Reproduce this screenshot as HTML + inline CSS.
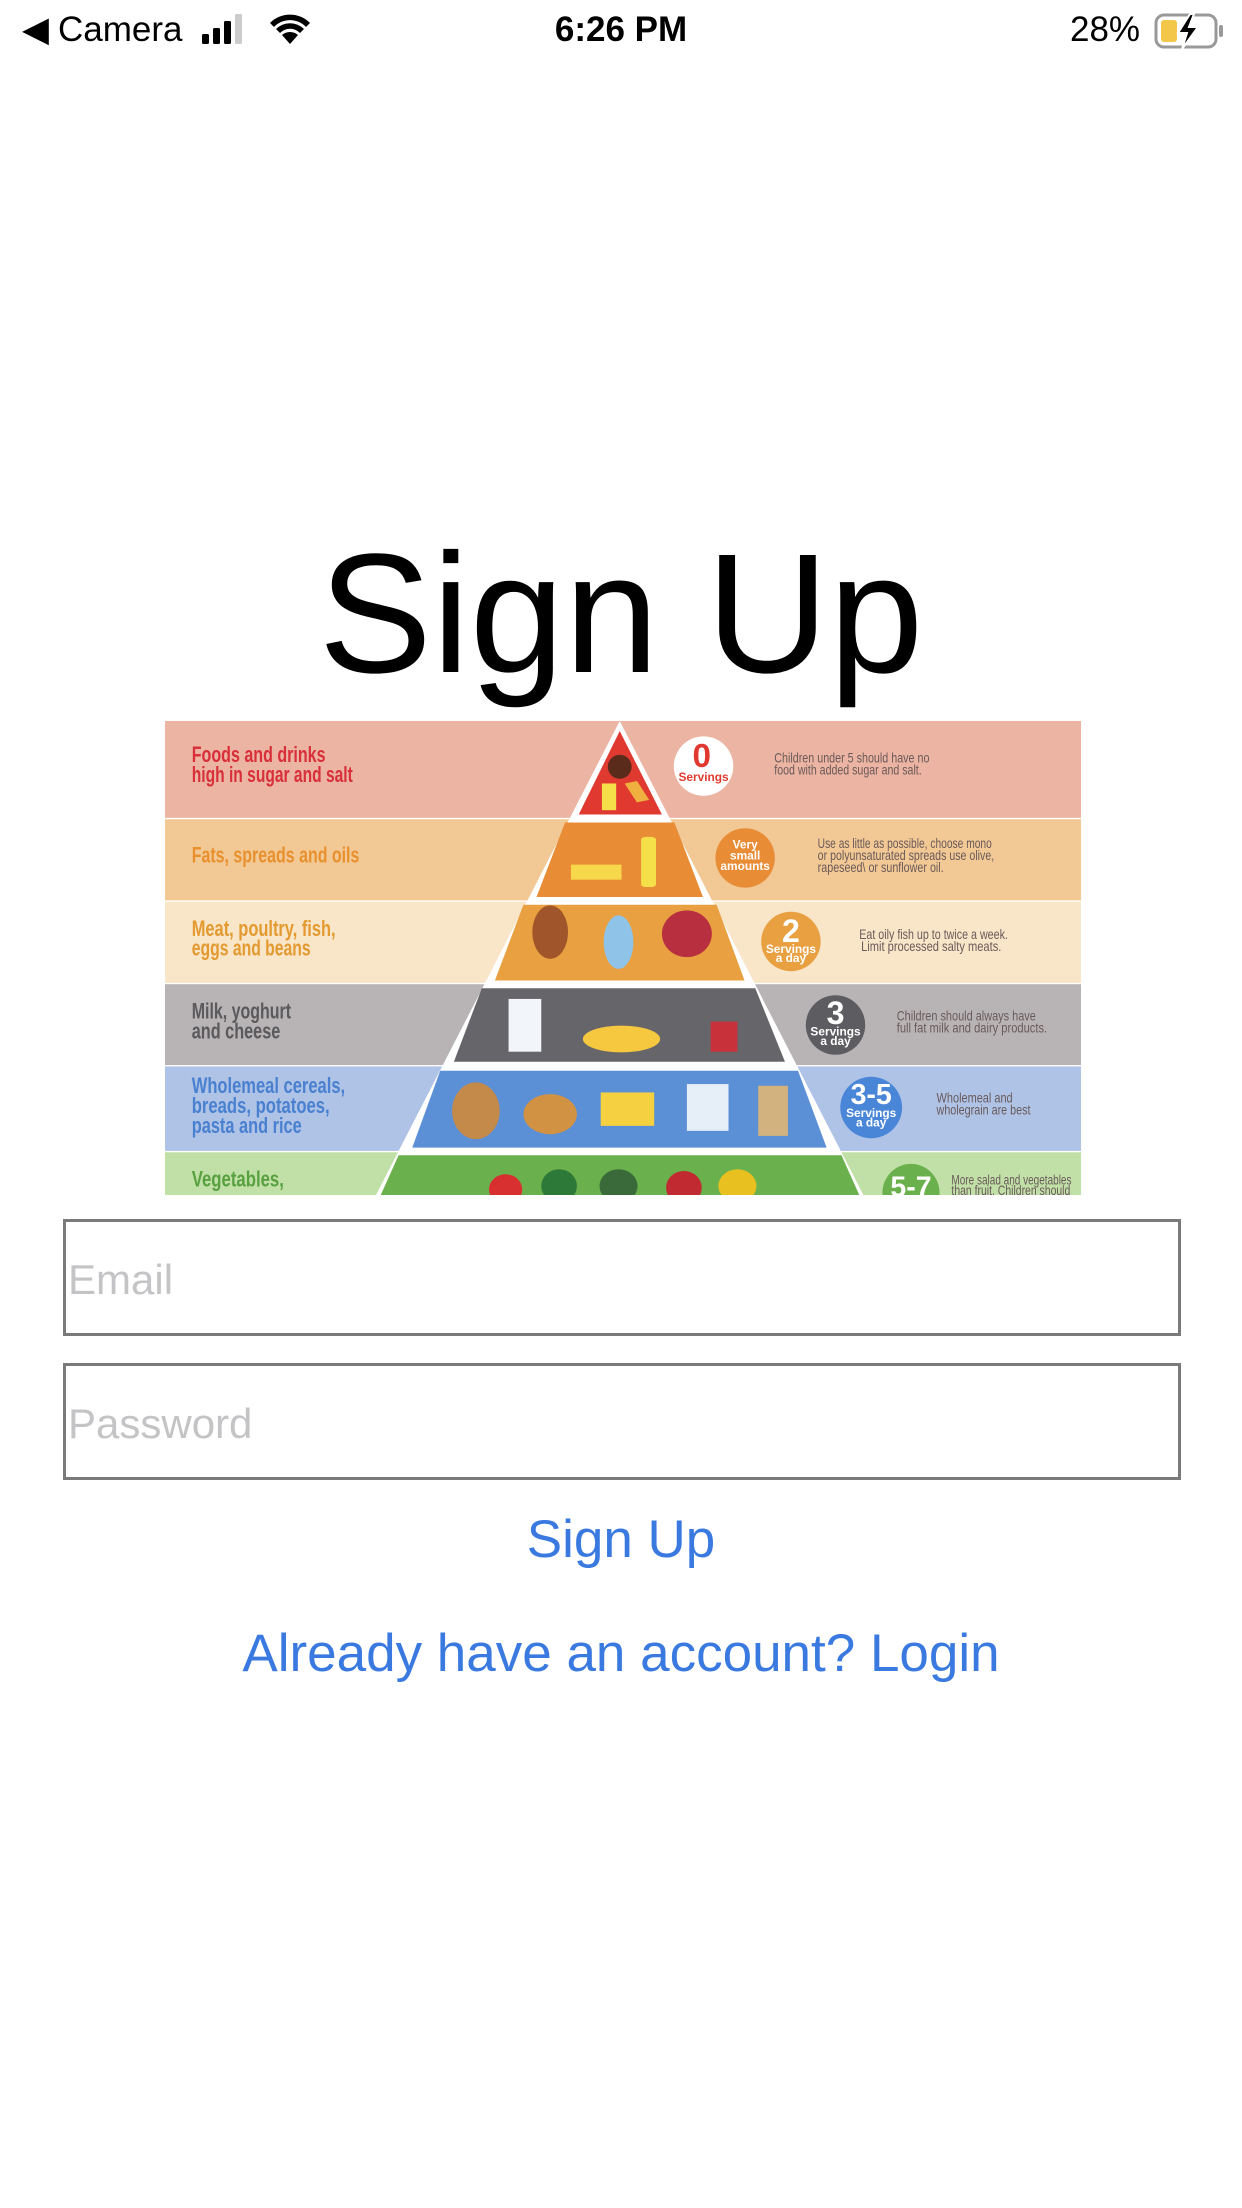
<!DOCTYPE html>
<html><head><meta charset="utf-8"><style>
html,body{margin:0;padding:0;background:#fff;}
body{width:1242px;height:2208px;position:relative;overflow:hidden;font-family:"Liberation Sans",Arial,sans-serif;}
.abs{position:absolute;}
.sb{font-size:35px;color:#000;top:10px;}
.inp{position:absolute;left:63px;width:1118px;height:117px;border:3px solid #7a7a7a;box-sizing:border-box;}
.ph{position:absolute;left:2px;top:34px;font-size:42px;color:#c4c4c6;}
.link{position:absolute;left:0;width:1242px;text-align:center;color:#3a7ae0;font-size:53px;}
</style></head><body>
<div class="abs sb" style="left:22px;">◀︎</div>
<div class="abs sb" style="left:58px;">Camera</div>
<svg class="abs" style="left:202px;top:14px" width="52" height="32" viewBox="0 0 52 32">
<rect x="0" y="20" width="7" height="10" rx="1.5" fill="#000"/><rect x="11" y="14" width="7" height="16" rx="1.5" fill="#000"/><rect x="22" y="7" width="7" height="23" rx="1.5" fill="#000"/><rect x="33" y="0" width="7" height="30" rx="1.5" fill="#ccc"/></svg>
<svg class="abs" style="left:268px;top:12px" width="44" height="34" viewBox="0 0 44 34">
<path d="M22 32 L14 23 A12 12 0 0 1 30 23 Z" fill="#000"/>
<path d="M8 17 A20 20 0 0 1 36 17 L32 21 A14 14 0 0 0 12 21 Z" fill="#000"/>
<path d="M2 11 A28 28 0 0 1 42 11 L38 15 A22 22 0 0 0 6 15 Z" fill="#000"/></svg>
<div class="abs sb" style="left:0;width:1242px;text-align:center;font-weight:bold;">6:26 PM</div>
<div class="abs sb" style="left:1070px;">28%</div>
<svg class="abs" style="left:1154px;top:12px" width="72" height="38" viewBox="0 0 72 38">
<rect x="2" y="3" width="60" height="32" rx="8" fill="none" stroke="#999" stroke-width="3"/>
<rect x="65" y="13" width="4" height="12" rx="2" fill="#999"/>
<rect x="7" y="8" width="16" height="22" rx="3" fill="#f3c74a"/>
<path d="M36 2 L24 21 L33 21 L28 37 L44 15 L35 15 L40 2 Z" fill="#000" stroke="#fff" stroke-width="2"/></svg>

<div class="abs" style="left:0;width:1242px;text-align:center;top:514px;font-size:170px;line-height:200px;color:#000;">Sign Up</div>

<svg class="abs" style="left:165px;top:721px" width="916" height="474" viewBox="7 28 1541 1419" preserveAspectRatio="none" font-family="Liberation Sans,Arial,sans-serif">
<rect x="7" y="28" width="1541" height="1419" fill="#fff"/>
<rect x="7" y="28" width="1541" height="290" fill="#ecb4a2"/>
<rect x="7" y="322" width="1541" height="243" fill="#f2c995"/>
<rect x="7" y="569" width="1541" height="243" fill="#f9e5c8"/>
<rect x="7" y="816" width="1541" height="242" fill="#b8b4b6"/>
<rect x="7" y="1062" width="1541" height="253" fill="#aec3e6"/>
<rect x="7" y="1319" width="1541" height="128" fill="#c1e0a7"/>
<polygon points="772,28 1182,1447 362,1447" fill="#fff"/>
<polygon points="772,58 843,308 703,308" fill="#e03a30"/>
<polygon points="680,332 864,332 912,555 632,555" fill="#e88c36"/>
<polygon points="610,578 935,578 982,805 562,805" fill="#e8a040"/>
<polygon points="540,828 1000,828 1050,1048 493,1048" fill="#66656a"/>
<polygon points="470,1075 1072,1075 1120,1305 423,1305" fill="#5b8fd6"/>
<polygon points="400,1328 1145,1328 1175,1447 370,1447" fill="#6ab04c"/>
<ellipse cx="772" cy="165" rx="20" ry="36" fill="#5a2a1a"/><rect x="742" y="215" width="24" height="80" fill="#f5e04a"/><rect x="790" y="210" width="22" height="60" fill="#f0b040" transform="rotate(-20 800 240)"/>
<rect x="690" y="458" width="85" height="45" fill="#f7d84a"/><rect x="808" y="375" width="25" height="150" rx="8" fill="#f5e04a"/>
<ellipse cx="655" cy="660" rx="30" ry="80" fill="#a0562a"/><ellipse cx="770" cy="690" rx="25" ry="80" fill="#8fc4e8"/><ellipse cx="885" cy="665" rx="42" ry="70" fill="#b83040"/>
<rect x="585" y="860" width="55" height="158" fill="#f2f6fa"/><ellipse cx="775" cy="980" rx="65" ry="40" fill="#f5c840"/><rect x="925" y="928" width="45" height="90" fill="#c8303a"/>
<ellipse cx="530" cy="1195" rx="40" ry="85" fill="#c48a4a"/><ellipse cx="655" cy="1205" rx="45" ry="60" fill="#d29244"/><rect x="740" y="1140" width="90" height="100" fill="#f5d040"/><rect x="885" y="1115" width="70" height="140" fill="#e6eef8"/><rect x="1005" y="1120" width="50" height="150" fill="#d2b27e"/>
<ellipse cx="580" cy="1430" rx="28" ry="45" fill="#d83030"/><ellipse cx="670" cy="1420" rx="30" ry="50" fill="#2d7a38"/><ellipse cx="770" cy="1420" rx="32" ry="50" fill="#3a6a3a"/><ellipse cx="880" cy="1425" rx="30" ry="50" fill="#c02a30"/><ellipse cx="970" cy="1420" rx="32" ry="50" fill="#e8c020"/>
<ellipse cx="913" cy="163" rx="50" ry="89" fill="#fff"/>
<ellipse cx="983" cy="438" rx="50" ry="89" fill="#e88c36"/>
<ellipse cx="1060" cy="688" rx="50" ry="89" fill="#e8a040"/>
<ellipse cx="1135" cy="938" rx="50" ry="89" fill="#5d5c60"/>
<ellipse cx="1195" cy="1185" rx="52" ry="92" fill="#4a86d8"/>
<ellipse cx="1262" cy="1440" rx="48" ry="86" fill="#6ab04c"/>
<g font-weight="bold" text-anchor="middle">
<text transform="translate(910,165) scale(1,1.78)" font-size="56" fill="#e03a30">0</text>
<text transform="translate(913,208) scale(1,1.78)" font-size="20" fill="#e03a30">Servings</text>
<text transform="translate(983,410) scale(1,1.78)" font-size="20" fill="#fff">Very</text>
<text transform="translate(983,442) scale(1,1.78)" font-size="20" fill="#fff">small</text>
<text transform="translate(983,474) scale(1,1.78)" font-size="20" fill="#fff">amounts</text>
<text transform="translate(1060,690) scale(1,1.78)" font-size="54" fill="#fff">2</text>
<text transform="translate(1060,722) scale(1,1.78)" font-size="20" fill="#fff">Servings</text>
<text transform="translate(1060,750) scale(1,1.78)" font-size="20" fill="#fff">a day</text>
<text transform="translate(1135,935) scale(1,1.78)" font-size="54" fill="#fff">3</text>
<text transform="translate(1135,970) scale(1,1.78)" font-size="20" fill="#fff">Servings</text>
<text transform="translate(1135,998) scale(1,1.78)" font-size="20" fill="#fff">a day</text>
<text transform="translate(1195,1175) scale(1,1.78)" font-size="48" fill="#fff">3-5</text>
<text transform="translate(1195,1214) scale(1,1.78)" font-size="20" fill="#fff">Servings</text>
<text transform="translate(1195,1242) scale(1,1.78)" font-size="20" fill="#fff">a day</text>
<text transform="translate(1262,1452) scale(1,1.78)" font-size="48" fill="#fff">5-7</text>
</g>
<g font-size="38" font-weight="bold" lengthAdjust="spacingAndGlyphs">
<text transform="translate(52,150) scale(1,1.78)" textLength="225" lengthAdjust="spacingAndGlyphs" fill="#d8303a">Foods and drinks</text>
<text transform="translate(52,210) scale(1,1.78)" textLength="271" lengthAdjust="spacingAndGlyphs" fill="#d8303a">high in sugar and salt</text>
<text transform="translate(52,452) scale(1,1.78)" textLength="282" lengthAdjust="spacingAndGlyphs" fill="#e8902e">Fats, spreads and oils</text>
<text transform="translate(52,672) scale(1,1.78)" textLength="242" lengthAdjust="spacingAndGlyphs" fill="#e39a30">Meat, poultry, fish,</text>
<text transform="translate(52,730) scale(1,1.78)" textLength="200" lengthAdjust="spacingAndGlyphs" fill="#e39a30">eggs and beans</text>
<text transform="translate(52,918) scale(1,1.78)" textLength="167" lengthAdjust="spacingAndGlyphs" fill="#5a595c">Milk, yoghurt</text>
<text transform="translate(52,978) scale(1,1.78)" textLength="149" lengthAdjust="spacingAndGlyphs" fill="#5a595c">and cheese</text>
<text transform="translate(52,1142) scale(1,1.78)" textLength="258" lengthAdjust="spacingAndGlyphs" fill="#4a80d0">Wholemeal cereals,</text>
<text transform="translate(52,1202) scale(1,1.78)" textLength="232" lengthAdjust="spacingAndGlyphs" fill="#4a80d0">breads, potatoes,</text>
<text transform="translate(52,1262) scale(1,1.78)" textLength="185" lengthAdjust="spacingAndGlyphs" fill="#4a80d0">pasta and rice</text>
<text transform="translate(52,1422) scale(1,1.78)" textLength="155" lengthAdjust="spacingAndGlyphs" fill="#58a040">Vegetables,</text>
</g>
<g font-size="24" fill="#6a5a5a">
<text transform="translate(1032,152) scale(1,1.78)" textLength="261" lengthAdjust="spacingAndGlyphs">Children under 5 should have no</text>
<text transform="translate(1032,188) scale(1,1.78)" textLength="248" lengthAdjust="spacingAndGlyphs">food with added sugar and salt.</text>
<text transform="translate(1105,408) scale(1,1.78)" textLength="293" lengthAdjust="spacingAndGlyphs">Use as little as possible, choose mono</text>
<text transform="translate(1105,444) scale(1,1.78)" textLength="297" lengthAdjust="spacingAndGlyphs">or polyunsaturated spreads use olive,</text>
<text transform="translate(1105,480) scale(1,1.78)" textLength="212" lengthAdjust="spacingAndGlyphs">rapeseed\ or sunflower oil.</text>
<text transform="translate(1175,680) scale(1,1.78)" textLength="250" lengthAdjust="spacingAndGlyphs">Eat oily fish up to twice a week.</text>
<text transform="translate(1178,716) scale(1,1.78)" textLength="236" lengthAdjust="spacingAndGlyphs">Limit processed salty meats.</text>
<text transform="translate(1238,925) scale(1,1.78)" textLength="234" lengthAdjust="spacingAndGlyphs">Children should always have</text>
<text transform="translate(1238,961) scale(1,1.78)" textLength="253" lengthAdjust="spacingAndGlyphs">full fat milk and dairy products.</text>
<text transform="translate(1305,1170) scale(1,1.78)" textLength="128" lengthAdjust="spacingAndGlyphs">Wholemeal and</text>
<text transform="translate(1305,1206) scale(1,1.78)" textLength="158" lengthAdjust="spacingAndGlyphs">wholegrain are best</text>
<text transform="translate(1330,1415) scale(1,1.78)" textLength="202" lengthAdjust="spacingAndGlyphs">More salad and vegetables</text>
<text transform="translate(1330,1447) scale(1,1.78)" textLength="200" lengthAdjust="spacingAndGlyphs">than fruit. Children should</text>
</g>
</svg>

<div class="inp" style="top:1219px;"><div class="ph">Email</div></div>
<div class="inp" style="top:1363px;"><div class="ph">Password</div></div>
<div class="link" style="top:1509px;">Sign Up</div>
<div class="link" style="top:1623px;">Already have an account? Login</div>
</body></html>
